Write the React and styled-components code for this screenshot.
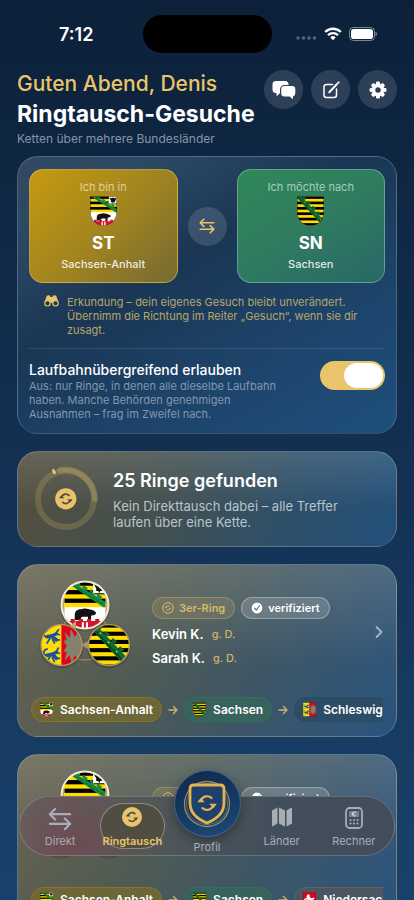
import React, { useId, useState } from 'react'
import styled, { createGlobalStyle, css } from 'styled-components'

const GOLD = '#e9c46a'
const WHITE = '#ffffff'
const NAVY = '#0d2038'
const RED = '#e2001a'
const YELLOW = '#ffdd00'
const GREEN = '#178a45'

/* coats of arms, all drawn on a 40 x 44 field */

const Stripes = ({ height }) => (
  <>
    <rect width='40' height={height} fill={YELLOW} />
    {[0, 1, 2, 3, 4, 5].map(i => i * 8 < height && (
      <rect key={i} y={i * 8} width='40' height='4' fill='#000' />
    ))}
  </>
)

const Leaf = ({ x, y }) => (
  <g transform={`translate(${x} ${y})`}>
    <circle cx='0' cy='-1' r='1.5' />
    <circle cx='2' cy='0.6' r='1.5' />
    <circle cx='0.4' cy='1.6' r='1.4' />
  </g>
)

const SaxonyField = () => (
  <g>
    <Stripes height={44} />
    <g fill='#0f6b35'>
      <path d='M-2 0 L4 -2 L41 37 L36 42 Z' />
      <Leaf x={10} y={3} />
      <Leaf x={17} y={10} />
      <Leaf x={24} y={17} />
      <Leaf x={31} y={25} />
    </g>
    <path d='M1 1 L37 40' fill='none' stroke='#063d1e' strokeWidth='1.2' />
    <path d='M11 9l1 1M19 18l1 1M27 27l1 1M34 34l1 1' stroke={YELLOW} strokeWidth='1.4' />
  </g>
)

const AnhaltField = () => (
  <g>
    <rect width='40' height='44' fill='#fff' />
    <Stripes height={24} />
    <path d='M1 0 H7 L40 19 V24 H38 Z' fill={GREEN} />
    <g fill={GREEN}>
      <Leaf x={12} y={2} />
      <Leaf x={19} y={6} />
      <Leaf x={26} y={10} />
      <Leaf x={33} y={14} />
    </g>
    <path d='M4 1 L39 22' fill='none' stroke='#0a5426' strokeWidth='0.8' strokeDasharray='3 1.5' />
    <rect x='28' width='12' height='11' fill='#fff' />
    <path d='M29 2l3 1 2-1 2 1 3-1-1 4-1 1 0 2-2 0-1 2-1-2-2 0 0-3-1-1z' fill='#111' />
    <path d='M10 36v-4c0-4 2-6 6-6 3-1 5-1 8 0l4 1 3 2-1 2-4 1v4h-3v-3h-6l-2 3h-3l1-3-1 3z' fill='#111' />
    <path d='M0 35h3v2h3v-2h4v2h4v-2h4v2h4v-2h4v2h4v-2h4v2h3v-2h3v9H0z' fill='#d5142a' />
    <path d='M17 38h6v6h-6z' fill='#fff' />
    <path d='M19 37h2v7h-2z' fill='#d5142a' />
  </g>
)

const Lion = ({ y }) => (
  <g transform={`translate(2 ${y})`} fill='none' stroke='#1c4fa0' strokeLinecap='round'>
    <path d='M4 8l5-1 4-2M9 7l4 4' strokeWidth='3.4' />
    <path d='M3 8c-4-1-2-6 1-6M13 4l2-3M13 5l3 1M12 11l4 0M7 9l-3 5M9 10l2 4' strokeWidth='1.7' />
  </g>
)

const HolsteinField = () => (
  <g>
    <rect width='20' height='44' fill={YELLOW} />
    <rect x='20' width='20' height='44' fill={RED} />
    <Lion y={5} />
    <Lion y={23} />
    <path
      d='M22 17l3-1-2-8 5 6 1-9 4 8 5-7 0 9 4-2v18l-4-2 0 9-5-7-3 9-2-9-5 5 2-8-3-1 3-5z'
      fill='#84816d'
    />
  </g>
)

const LowerSaxonyField = () => (
  <g>
    <rect width='40' height='44' fill={RED} />
    <path
      d='M9 15l4-7 5-2 2 2 1 7 6 3 6-2 3 3-3 3-2-1-1 4 4 5-2 4-3-1 1-3-5-4-7 0-3 5 2 4-4 1-2-5 3-6-1-3-6 1-3 4-2-2 3-6 7-2-1-4-3 3z'
      fill='#fff'
    />
  </g>
)

const FIELDS = {
  st: AnhaltField,
  sn: SaxonyField,
  sh: HolsteinField,
  ni: LowerSaxonyField,
}

const ROUND_SHIELD = 'M0 0H40V24C40 36 31 44 20 44S0 36 0 24Z'
const SQUARE_SHIELD = 'M0 0H40V40Q40 44 36 44H4Q0 44 0 40Z'

const Shield = ({ land, width }) => {
  const id = useId()
  const Field = FIELDS[land]
  const outline = land === 'sh' || land === 'ni' ? SQUARE_SHIELD : ROUND_SHIELD
  return (
    <svg width={width} height={Math.round(width * 1.12)} viewBox='0 0 40 44' aria-hidden='true'>
      <clipPath id={id}><path d={outline} /></clipPath>
      <g clipPath={`url(#${id})`}>
        <Field />
        <path d={outline} fill='none' stroke='#222' strokeOpacity='0.7' strokeWidth='2' />
      </g>
    </svg>
  )
}

const Medal = ({ land, cx, cy, r, rim, rimWidth }) => {
  const id = useId()
  const Field = FIELDS[land]
  const scale = (r * 2) / 40
  const fit = land === 'st'
    ? `translate(${cx - r + 3} ${cy - r}) scale(${scale * 0.87} ${scale * 0.91})`
    : `translate(${cx - r} ${cy - r - 1}) scale(${scale})`
  return (
    <g>
      <circle cx={cx} cy={cy + 1} r={r + 2} fill='#000' opacity='0.15' />
      <clipPath id={id}><circle cx={cx} cy={cy} r={r} /></clipPath>
      <g clipPath={`url(#${id})`}>
        <rect x={cx - r} y={cy - r} width={r * 2} height={r * 2} fill='#c9a761' />
        <g transform={fit}><Field /></g>
      </g>
      <circle cx={cx} cy={cy} r={r} fill='none' stroke={rim} strokeWidth={rimWidth} />
    </g>
  )
}

const RingEmblem = ({ lands }) => (
  <svg width='96' height='94' viewBox='0 0 96 94' aria-hidden='true'>
    <circle cx='48' cy='57' r='24' fill='none' stroke='#a8966a' strokeWidth='1.5' opacity='0.7' />
    <Medal land={lands[2]} cx={24.5} cy={66} r={20.5} rim='#ac9560' rimWidth={1.5} />
    <Medal land={lands[1]} cx={72} cy={66} r={20.5} rim='#ac9560' rimWidth={1.5} />
    <Medal land={lands[0]} cx={48} cy={26} r={23.5} rim='#f3ead6' rimWidth={2} />
    <path d='M33 47l6-5 0 8z' fill='#c6a968' />
    <path d='M44 66l7-4v8z' fill='#a8966a' />
  </svg>
)

/* icons */

const SwapIcon = ({ size, weight = 2 }) => (
  <svg width={size} height={size} viewBox='0 0 20 20' fill='none' stroke='currentColor' strokeWidth={weight} strokeLinecap='round' strokeLinejoin='round' aria-hidden='true'>
    <path d='M18.5 6H1.5M6 1.5L1.5 6 6 10.5M1.5 14h17M14 9.5l4.500 4.500-4.500 4.500' />
  </svg>
)

const SyncPaths = ({ color, weight }) => (
  <g>
    <path d='M5.6 9A7 7 0 0 1 17 6.6M18.4 15A7 7 0 0 1 7 17.4' fill='none' stroke={color} strokeWidth={weight} strokeLinecap='round' />
    <path d='M1.4 11.2h8.2L5 6.4zM22.6 12.8h-8.2l4.6 4.8z' fill={color} />
  </g>
)

const SyncBadge = ({ size }) => (
  <svg width={size} height={size} viewBox='0 0 24 24' aria-hidden='true'>
    <circle cx='12' cy='12' r='12' fill={GOLD} />
    <g transform='translate(3.5 3.5) scale(0.71)'>
      <SyncPaths color='#4b4d43' weight={2.6} />
    </g>
  </svg>
)

const RingPillIcon = () => (
  <svg width='12' height='12' viewBox='0 0 24 24' aria-hidden='true'>
    <circle cx='12' cy='12' r='10.5' fill='none' stroke={GOLD} strokeWidth='1.8' />
    <g transform='translate(5 5) scale(0.58)'>
      <SyncPaths color={GOLD} weight={3} />
    </g>
  </svg>
)

const VerifiedIcon = () => (
  <svg width='12' height='12' viewBox='0 0 24 24' aria-hidden='true'>
    {[0, 22.5, 45, 67.5].map(a => (
      <rect key={a} x='3.5' y='3.5' width='17' height='17' rx='3' fill='#fff' transform={`rotate(${a} 12 12)`} />
    ))}
    <path d='M7.5 12.5l3.2 3.5 6-8' fill='none' stroke='#65747c' strokeWidth='2.4' strokeLinecap='round' strokeLinejoin='round' />
  </svg>
)

const ChatIcon = () => (
  <svg width='24' height='20' viewBox='0 0 24 20' aria-hidden='true'>
    <path d='M4 1h9a3.5 3.5 0 0 1 3.5 3.5V5h-4A4.5 4.5 0 0 0 8 9.5V13l-3.5 3.5V13H4A3.5 3.5 0 0 1 .5 9.5v-5A3.5 3.5 0 0 1 4 1z' fill='#fff' />
    <path d='M12.5 6H20a3.3 3.3 0 0 1 3.3 3.3v4A3.3 3.3 0 0 1 21 16.4v2.8l-3.4-2.6h-5.1a3.3 3.3 0 0 1-3.3-3.3v-4A3.3 3.3 0 0 1 12.5 6z' fill='#fff' />
  </svg>
)

const ComposeIcon = () => (
  <svg width='18' height='18' viewBox='0 0 18 18' fill='none' stroke='#fff' strokeWidth='1.5' strokeLinecap='round' strokeLinejoin='round' aria-hidden='true'>
    <path d='M10.5 3.5H4.5A2.5 2.5 0 0 0 2 6v8a2.5 2.5 0 0 0 2.5 2.5h7.5a2.5 2.5 0 0 0 2.5-2.5V8' />
    <path d='M8 10.5l7-7.5M7.3 11.3l.4-.4M16.4 1.6l.2-.2' strokeWidth='2' />
  </svg>
)

const GearIcon = () => (
  <svg width='18' height='18' viewBox='0 0 18 18' aria-hidden='true'>
    {[0, 45, 90, 135].map(a => (
      <rect key={a} x='7' y='0.6' width='4' height='16.8' rx='1.2' fill='#fff' transform={`rotate(${a} 9 9)`} />
    ))}
    <circle cx='9' cy='9' r='6.4' fill='#fff' />
    <circle cx='9' cy='9' r='2.7' fill='#2b3d54' />
  </svg>
)

const BinocularsIcon = () => (
  <svg width='15' height='12' viewBox='0 0 15 12' aria-hidden='true'>
    <path d='M2.8.8Q4.5-.4 6.3.8V2h2.4V.8Q10.5-.4 12.2.8L14.4 7H.6z' fill={GOLD} />
    <circle cx='3.5' cy='8.3' r='2.7' fill='#1a3655' stroke={GOLD} strokeWidth='1.2' />
    <circle cx='11.5' cy='8.3' r='2.7' fill='#1a3655' stroke={GOLD} strokeWidth='1.2' />
    <path d='M6.5 5h2v3h-2z' fill={GOLD} />
  </svg>
)

const ProgressRing = () => (
  <svg width='66' height='66' viewBox='0 0 66 66' aria-hidden='true'>
    <circle cx='33' cy='33' r='28' fill='none' stroke={GOLD} strokeOpacity='0.2' strokeWidth='6' />
    <path d='M27 4A30 30 0 0 1 62 33' fill='none' stroke={GOLD} strokeOpacity='0.26' strokeWidth='6' strokeLinecap='round' />
    <path d='M19.5 2.5q3 1 3.5 5-2 1-3 0-1.5-2.5-.5-5z' fill={GOLD} />
    <g transform='translate(22 22) scale(0.9)'>
      <circle cx='12' cy='12' r='11.8' fill={GOLD} />
      <g transform='translate(3.5 3.5) scale(0.71)'>
        <SyncPaths color='#4b4d43' weight={2.6} />
      </g>
    </g>
  </svg>
)

const ArrowIcon = () => (
  <svg width='10' height='10' viewBox='0 0 10 10' fill='none' stroke={GOLD} strokeWidth='1.3' strokeLinecap='round' strokeLinejoin='round' opacity='0.85' aria-hidden='true'>
    <path d='M1 5h8M5.5 1.5L9 5 5.5 8.5' />
  </svg>
)

const ChevronIcon = () => (
  <svg width='8' height='14' viewBox='0 0 8 14' fill='none' stroke='#a9b7c4' strokeWidth='1.8' strokeLinecap='round' strokeLinejoin='round' aria-hidden='true'>
    <path d='M1.5 2l5 5-5 5' />
  </svg>
)

const ProfileIcon = () => (
  <svg width='50' height='50' viewBox='0 0 50 50' aria-hidden='true'>
    <circle cx='25' cy='25' r='22.5' fill='none' stroke={GOLD} strokeOpacity='0.6' strokeWidth='1.3' />
    <circle cx='25' cy='25' r='20.5' fill='none' stroke={GOLD} strokeOpacity='0.35' strokeWidth='1' />
    <path d='M12 6H38Q42 6 42 10V24C42 34 35 40 25 44 15 40 8 34 8 24V10Q8 6 12 6z' fill='#1d416c' stroke='#e3b44f' strokeWidth='2.8' />
    <g transform='translate(14 13) scale(0.92)'>
      <SyncPaths color='#e3b44f' weight={2.3} />
    </g>
  </svg>
)

const MapIcon = () => (
  <svg width='22' height='20' viewBox='0 0 22 20' fill='currentColor' aria-hidden='true'>
    <path d='M1 3.5L6.5.6v16L2 19.2q-1 .4-1-.8zM8 .6l6 2.8v16l-6-2.8zM15.5 3.4L20 .8q1-.4 1 .8v15l-5.5 2.8z' />
  </svg>
)

const CalculatorIcon = () => (
  <svg width='18' height='22' viewBox='0 0 18 22' aria-hidden='true'>
    <rect x='1' y='1' width='16' height='20' rx='3.5' fill='none' stroke='currentColor' strokeWidth='1.8' />
    <rect x='4' y='4' width='10' height='6' rx='1' fill='currentColor' opacity='0.55' />
    <path d='M10.8 5.6a2 2 0 1 0 0 2.8M6.5 7h3' fill='none' stroke='#fff' strokeWidth='0.9' opacity='0.8' />
    {[5.5, 9, 12.5].map(x => [13, 16.5].map(y => (
      <circle key={`${x}-${y}`} cx={x} cy={y} r='1.1' fill='currentColor' />
    )))}
  </svg>
)

const WifiIcon = () => (
  <svg width='18' height='14' viewBox='0 0 18 14' fill='none' stroke='#fff' strokeWidth='2.3' aria-hidden='true'>
    <path d='M1.2 5a11 11 0 0 1 15.6 0M4 8.2a7 7 0 0 1 10 0' />
    <path d='M9 13.2L6.3 10.4a3.8 3.8 0 0 1 5.4 0z' fill='#fff' stroke='none' />
  </svg>
)

const BatteryIcon = () => (
  <svg width='28' height='14' viewBox='0 0 28 14' aria-hidden='true'>
    <rect x='0.5' y='0.5' width='25' height='13' rx='4' fill='none' stroke='#fff' strokeOpacity='0.45' />
    <rect x='2' y='2' width='22' height='10' rx='2.8' fill='#fff' />
    <path d='M26.5 4.8q1.5.6 1.5 2.2t-1.5 2.2z' fill='#fff' opacity='0.5' />
  </svg>
)

const SignalDots = () => (
  <svg width='21' height='12' viewBox='0 0 21 12' fill='#fff' opacity='0.3' aria-hidden='true'>
    {[2, 7.5, 13, 18.5].map(x => <circle key={x} cx={x} cy='10' r='1.8' />)}
  </svg>
)

const RINGS = [
  {
    id: 1,
    people: ['Kevin K.', 'Sarah K.'],
    stops: [
      { land: 'st', name: 'Sachsen-Anhalt' },
      { land: 'sn', name: 'Sachsen' },
      { land: 'sh', name: 'Schleswig-Holstein' },
    ],
  },
  {
    id: 2,
    people: [],
    stops: [
      { land: 'st', name: 'Sachsen-Anhalt' },
      { land: 'sn', name: 'Sachsen' },
      { land: 'ni', name: 'Niedersachsen' },
    ],
  },
]

const RingCard = ({ people, stops }) => (
  <Card as='a' href='#ring' $tone='ring'>
    <RingTop>
      <RingEmblem lands={stops.map(s => s.land)} />
      <RingInfo>
        <Pills>
          <Pill $gold><RingPillIcon />3er-Ring</Pill>
          <Pill><VerifiedIcon />verifiziert</Pill>
        </Pills>
        {people.map(name => (
          <Person key={name}>
            {name}
            <Grade>g. D.</Grade>
          </Person>
        ))}
      </RingInfo>
      <Chevron><ChevronIcon /></Chevron>
    </RingTop>
    <Chips>
      {stops.map((stop, i) => (
        <React.Fragment key={stop.land}>
          {i > 0 && <ArrowIcon />}
          <Chip $land={stop.land}>
            <Shield land={stop.land} width={13} />
            {stop.name}
          </Chip>
        </React.Fragment>
      ))}
    </Chips>
  </Card>
)

const App = () => {
  const [crossCareer, setCrossCareer] = useState(true)
  return (
    <Screen>
      <GlobalStyle />
      <StatusBar>
        <Clock>7:12</Clock>
        <Island />
        <StatusIcons>
          <SignalDots />
          <WifiIcon />
          <BatteryIcon />
        </StatusIcons>
      </StatusBar>
      <Content>
        <Header>
          <div>
            <Greeting>Guten Abend, Denis</Greeting>
            <Title>Ringtausch-Gesuche</Title>
            <Subtitle>Ketten über mehrere Bundesländer</Subtitle>
          </div>
          <Actions>
            <RoundButton aria-label='Nachrichten'><ChatIcon /></RoundButton>
            <RoundButton aria-label='Gesuch bearbeiten'><ComposeIcon /></RoundButton>
            <RoundButton aria-label='Einstellungen'><GearIcon /></RoundButton>
          </Actions>
        </Header>

        <Card $tone='route'>
          <Route>
            <LandTile $land='st'>
              <TileLabel>Ich bin in</TileLabel>
              <Shield land='st' width={27} />
              <TileCode>ST</TileCode>
              <TileName>Sachsen-Anhalt</TileName>
            </LandTile>
            <RoundButton $gold aria-label='Richtung tauschen'><SwapIcon size={16} /></RoundButton>
            <LandTile $land='sn'>
              <TileLabel>Ich möchte nach</TileLabel>
              <Shield land='sn' width={27} />
              <TileCode>SN</TileCode>
              <TileName>Sachsen</TileName>
            </LandTile>
          </Route>
          <Hint>
            <BinocularsIcon />
            <HintText>
              Erkundung – dein eigenes Gesuch bleibt unverändert. Übernimm die Richtung im Reiter „Gesuch“, wenn sie dir zusagt.
            </HintText>
          </Hint>
          <Option>
            <OptionText htmlFor='cross-career'>
              <OptionTitle>Laufbahnübergreifend erlauben</OptionTitle>
              <OptionNote>
                Aus: nur Ringe, in denen alle dieselbe Laufbahn haben. Manche Behörden genehmigen Ausnahmen – frag im Zweifel nach.
              </OptionNote>
            </OptionText>
            <Switch
              id='cross-career'
              type='checkbox'
              role='switch'
              checked={crossCareer}
              onChange={e => setCrossCareer(e.target.checked)}
            />
          </Option>
        </Card>

        <Card $tone='summary'>
          <Summary>
            <ProgressRing />
            <div>
              <SummaryTitle>25 Ringe gefunden</SummaryTitle>
              <SummaryNote>Kein Direkttausch dabei – alle Treffer laufen über eine Kette.</SummaryNote>
            </div>
          </Summary>
        </Card>

        {RINGS.map(ring => <RingCard key={ring.id} {...ring} />)}
      </Content>

      <TabBar>
        <Tab href='#direkt'><SwapIcon size={24} weight={1.8} />Direkt</Tab>
        <Tab href='#ringtausch' $active>
          <SyncBadge size={20} />
          Ringtausch
        </Tab>
        <Tab href='#profil' $center>
          <ProfileDisc><ProfileIcon /></ProfileDisc>
          Profil
        </Tab>
        <Tab href='#laender'><MapIcon />Länder</Tab>
        <Tab href='#rechner'><CalculatorIcon />Rechner</Tab>
      </TabBar>
    </Screen>
  )
}

const GlobalStyle = createGlobalStyle`
  * {
    box-sizing: border-box;
  }
  body {
    margin: 0;
    background: ${NAVY};
    font-family: Inter, 'Noto Sans', sans-serif;
    color: ${WHITE};
  }
  h1, h2, p {
    margin: 0;
  }
  a {
    color: inherit;
    text-decoration: none;
  }
  button {
    font: inherit;
    color: inherit;
    cursor: pointer;
  }
  svg {
    display: block;
    flex: none;
  }
`
const Screen = styled.div`
  position: relative;
  height: 100vh;
  display: flex;
  flex-direction: column;
  overflow: hidden;
  background: linear-gradient(180deg, #0c2039 0%, #0f2743 20%, #132f52 50%, #173b63 80%, #18426b 100%);
`
const StatusBar = styled.div`
  flex: none;
  height: 68px;
  display: grid;
  grid-template-columns: 1fr auto 1fr;
  align-items: center;
`
const Clock = styled.div`
  padding-left: 10px;
  font-size: 18px;
  font-weight: 600;
  text-align: center;
`
const Island = styled.div`
  width: 129px;
  height: 38px;
  border-radius: 19px;
  background: #000;
`
const StatusIcons = styled.div`
  padding-left: 24px;
  display: flex;
  align-items: center;
  gap: 7px;
`
const Content = styled.main`
  flex: 1;
  min-height: 0;
  overflow-y: auto;
  scrollbar-width: none;
  padding: 0 17px 120px;
`
const Header = styled.header`
  height: 88px;
  display: flex;
  justify-content: space-between;
  white-space: nowrap;
`
const Greeting = styled.p`
  font-size: 21px;
  font-weight: 500;
  line-height: 32px;
  color: ${GOLD};
`
const Title = styled.h1`
  font-size: 23px;
  font-weight: 700;
  line-height: 28px;
`
const Subtitle = styled.p`
  font-size: 12px;
  line-height: 22px;
  color: #8795a6;
`
const Actions = styled.div`
  display: flex;
  gap: 8px;
  padding-top: 2px;
`
const RoundButton = styled.button`
  flex: none;
  width: 39px;
  height: 39px;
  padding: 0;
  border: 0;
  border-radius: 50%;
  display: grid;
  place-items: center;
  background: rgba(255, 255, 255, 0.13);
  ${p => p.$gold && css`color: ${GOLD};`}
`

const cardTones = {
  route: css`
    padding: 12px 11px;
    background: linear-gradient(150deg, #334862 0%, #2c4964 16%, #1a3654 40%, #1d4268 65%, #1e4f7c 100%);
  `,
  summary: css`
    padding: 14px 15px;
    background:
      linear-gradient(180deg, rgba(255, 255, 255, 0.12), rgba(255, 255, 255, 0) 60%),
      linear-gradient(105deg, #534f3e 0%, #43504f 38%, #2f5069 70%, #22507a 100%);
  `,
  ring: css`
    padding: 14px 13px;
    background:
      linear-gradient(180deg, rgba(255, 255, 255, 0.13), rgba(255, 255, 255, 0) 60%),
      linear-gradient(120deg, #67634f 0%, #515b53 36%, #3f5664 62%, #29547f 100%);
  `,
}
const Card = styled.section`
  display: block;
  margin-bottom: 17px;
  border: 1px solid rgba(255, 255, 255, 0.2);
  border-bottom-color: rgba(255, 255, 255, 0.1);
  border-radius: 21px;
  ${p => cardTones[p.$tone]}
`
const Route = styled.div`
  display: grid;
  grid-template-columns: 1fr auto 1fr;
  align-items: center;
  gap: 10px;
`
const tileTones = {
  st: css`
    border-color: rgba(226, 200, 110, 0.5);
    background: linear-gradient(135deg, #c59a10 0%, #a3851f 50%, #766a33 100%);
  `,
  sn: css`
    border-color: rgba(140, 210, 180, 0.5);
    background: linear-gradient(150deg, #2f8858 0%, #2f7b5f 50%, #2a6768 100%);
  `,
}
const LandTile = styled.button`
  height: 114px;
  padding: 10px 0 0;
  border: 1px solid;
  border-radius: 14px;
  display: flex;
  flex-direction: column;
  align-items: center;
  ${p => tileTones[p.$land]}
`
const TileLabel = styled.span`
  margin-bottom: 2px;
  font-size: 11px;
  line-height: 14px;
  color: rgba(255, 255, 255, 0.6);
`
const TileCode = styled.span`
  margin-top: 6px;
  font-size: 17px;
  font-weight: 700;
  line-height: 22px;
`
const TileName = styled.span`
  font-size: 11px;
  font-weight: 500;
  line-height: 20px;
  color: rgba(255, 255, 255, 0.88);
`
const Hint = styled.div`
  margin-top: 12px;
  padding: 0 15px 11px;
  display: flex;
  gap: 8px;
`
const HintText = styled.p`
  font-size: 11px;
  line-height: 14px;
  color: #b5a66b;
`
const Option = styled.div`
  border-top: 1px solid rgba(255, 255, 255, 0.12);
  padding-top: 12px;
  display: flex;
  justify-content: space-between;
  align-items: flex-start;
`
const OptionText = styled.label`
  max-width: 258px;
`
const OptionTitle = styled.span`
  display: block;
  font-size: 14px;
  font-weight: 500;
  line-height: 18px;
`
const OptionNote = styled.span`
  display: block;
  font-size: 11px;
  line-height: 14px;
  color: #8297ae;
`
const Switch = styled.input`
  appearance: none;
  flex: none;
  width: 65px;
  height: 29px;
  margin: 0;
  padding: 2px;
  border-radius: 15px;
  display: flex;
  background: #5b6b7d;
  &::before {
    content: '';
    width: 39px;
    border-radius: 13px;
    background: ${WHITE};
  }
  &:checked {
    justify-content: flex-end;
    background: ${GOLD};
  }
`
const Summary = styled.div`
  display: flex;
  align-items: center;
  gap: 14px;
`
const SummaryTitle = styled.h2`
  font-size: 18px;
  font-weight: 600;
  line-height: 26px;
`
const SummaryNote = styled.p`
  margin-top: 4px;
  max-width: 240px;
  font-size: 13px;
  line-height: 16px;
  color: #bac4c9;
`
const RingTop = styled.div`
  display: flex;
  align-items: flex-start;
  padding-left: 6px;
`
const RingInfo = styled.div`
  flex: 1;
  margin-left: 19px;
  padding-top: 18px;
`
const Pills = styled.div`
  display: flex;
  gap: 6px;
  margin-bottom: 3px;
`
const Pill = styled.span`
  height: 22px;
  padding: 0 9px;
  border: 1px solid ${p => p.$gold ? 'rgba(233, 196, 106, 0.3)' : 'rgba(255, 255, 255, 0.3)'};
  border-radius: 11px;
  display: flex;
  align-items: center;
  gap: 5px;
  background: ${p => p.$gold ? 'rgba(233, 196, 106, 0.14)' : 'rgba(255, 255, 255, 0.16)'};
  font-size: 11px;
  font-weight: 600;
  color: ${p => p.$gold ? '#d7b969' : WHITE};
`
const Person = styled.p`
  display: flex;
  align-items: center;
  gap: 8px;
  font-size: 13px;
  font-weight: 600;
  line-height: 24px;
`
const Grade = styled.span`
  font-size: 11px;
  font-weight: 500;
  color: #cfb36b;
`
const Chevron = styled.span`
  align-self: center;
  padding-top: 12px;
`
const Chips = styled.div`
  margin-top: 24px;
  display: flex;
  align-items: center;
  gap: 6px;
  overflow: hidden;
`
const chipTones = {
  st: css`
    border-color: #8d7425;
    background: #6d6638;
  `,
  sn: css`
    border-color: #32705a;
    background: #38635d;
  `,
  sh: css`
    border-color: #294b65;
    background: #2d4c66;
  `,
  ni: css`
    border-color: #66615d;
    background: #4b5660;
  `,
}
const Chip = styled.span`
  flex: none;
  height: 25px;
  padding: 0 8px;
  border: 1px solid;
  border-radius: 13px;
  display: flex;
  align-items: center;
  gap: 7px;
  font-size: 12px;
  font-weight: 600;
  white-space: nowrap;
  ${p => chipTones[p.$land]}
`
const TabBar = styled.nav`
  position: absolute;
  left: 19px;
  right: 19px;
  bottom: 44px;
  height: 60px;
  padding: 0 4px;
  border: 1px solid rgba(255, 255, 255, 0.18);
  border-radius: 30px;
  display: grid;
  grid-template-columns: repeat(5, 1fr);
  background:
    radial-gradient(circle at 50px 48px, rgba(120, 64, 80, 0.6), rgba(120, 64, 80, 0) 70px),
    linear-gradient(100deg, #65615d 0%, #5a5957 25%, #495459 48%, #414e5b 70%, #434c5b 100%);
`
const Tab = styled.a`
  height: 46px;
  margin: 6px 4px 0;
  border: 1px solid transparent;
  border-radius: 23px;
  display: flex;
  flex-direction: column;
  align-items: center;
  justify-content: space-between;
  padding: 3px 0 0;
  font-size: 11px;
  line-height: 14px;
  color: #a9adb4;
  ${p => p.$active && css`
    border-color: rgba(220, 215, 190, 0.45);
    background: #504e42;
    color: ${GOLD};
    font-weight: 600;
  `}
  ${p => p.$center && css`
    justify-content: flex-end;
    margin-top: 12px;
    gap: 3px;
  `}
`
const ProfileDisc = styled.span`
  flex: none;
  width: 67px;
  height: 67px;
  border: 1px solid #3c6288;
  border-radius: 50%;
  display: grid;
  place-items: center;
  background: linear-gradient(160deg, #10294a 0%, #16375f 50%, #1c4c7a 100%);
  box-shadow: 0 4px 12px rgba(0, 0, 0, 0.35);
`

export default App
